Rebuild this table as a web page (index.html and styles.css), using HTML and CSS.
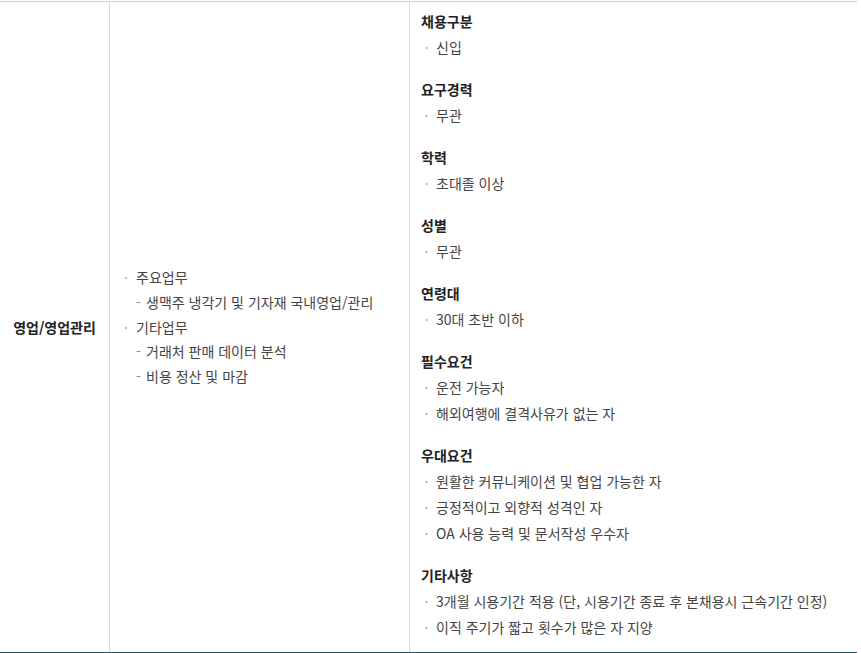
FILE: index.html
```html
<!DOCTYPE html>
<html lang="ko">
<head>
<meta charset="utf-8">
<link rel="stylesheet" href="styles.css">
</head>
<body>
<div class="table">
  <div class="col col-title">
    <span class="title">영업/영업관리</span>
  </div>
  <div class="col col-duty">
    <ul class="duty">
      <li class="main">주요업무</li>
      <li class="sub">생맥주 냉각기 및 기자재 국내영업/관리</li>
      <li class="main">기타업무</li>
      <li class="sub">거래처 판매 데이터 분석</li>
      <li class="sub">비용 정산 및 마감</li>
    </ul>
  </div>
  <div class="col col-req">
    <div class="sec">
      <h3>채용구분</h3>
      <ul><li>신입</li></ul>
    </div>
    <div class="sec">
      <h3>요구경력</h3>
      <ul><li>무관</li></ul>
    </div>
    <div class="sec">
      <h3>학력</h3>
      <ul><li>초대졸 이상</li></ul>
    </div>
    <div class="sec">
      <h3>성별</h3>
      <ul><li>무관</li></ul>
    </div>
    <div class="sec">
      <h3>연령대</h3>
      <ul><li>30대 초반 이하</li></ul>
    </div>
    <div class="sec">
      <h3>필수요건</h3>
      <ul><li>운전 가능자</li><li>해외여행에 결격사유가 없는 자</li></ul>
    </div>
    <div class="sec">
      <h3>우대요건</h3>
      <ul><li>원활한 커뮤니케이션 및 협업 가능한 자</li><li>긍정적이고 외향적 성격인 자</li><li>OA 사용 능력 및 문서작성 우수자</li></ul>
    </div>
    <div class="sec">
      <h3>기타사항</h3>
      <ul><li>3개월 시용기간 적용 (단, 시용기간 종료 후 본채용시 근속기간 인정)</li><li>이직 주기가 짧고 횟수가 많은 자 지양</li></ul>
    </div>
  </div>
</div>
</body>
</html>
```

FILE: styles.css
```css
html, body {
  margin: 0;
  padding: 0;
  background: #fff;
}
body {
  padding-top: 1px;
  font-family: "Noto Sans CJK KR", "Noto Sans", sans-serif;
  font-size: 14px;
  color: #333;
}
.table {
  width: 857px;
  display: flex;
  border-top: 1px solid #cfcfcf;
  border-bottom: 1px solid #2f505b;
}
.col {
  box-sizing: border-box;
}
.col-title {
  width: 110px;
  border-right: 1px solid #dcdcdc;
  display: flex;
  align-items: center;
  justify-content: center;
}
.title {
  font-weight: bold;
  color: #222;
  line-height: 20px;
}
.col-duty {
  width: 300px;
  border-right: 1px solid #dcdcdc;
  display: flex;
  align-items: center;
}
.col-req {
  flex: 1;
  padding: 6px 0 12px 11px;
}
ul {
  list-style: none;
  margin: 0;
  padding: 0;
}
.duty li {
  line-height: 24.75px;
  color: #444;
}
.duty .main {
  padding-left: 26px;
}
.duty .main::before {
  content: "·";
  display: inline-block;
  width: 12px;
  margin-left: -12px;
  color: #aaa;
}
.duty .sub {
  padding-left: 36px;
}
.duty .sub::before {
  content: "-";
  display: inline-block;
  width: 10px;
  margin-left: -10px;
  color: #888;
}
.sec + .sec {
  margin-top: 16px;
}
.sec h3 {
  margin: 0;
  font-size: 14px;
  font-weight: bold;
  color: #222;
  line-height: 26px;
}
.sec li {
  line-height: 26px;
  padding-left: 15px;
  color: #444;
}
.sec li::before {
  content: "·";
  display: inline-block;
  width: 11px;
  margin-left: -15px;
  margin-right: 4px;
  text-align: center;
  color: #aaa;
}
```
